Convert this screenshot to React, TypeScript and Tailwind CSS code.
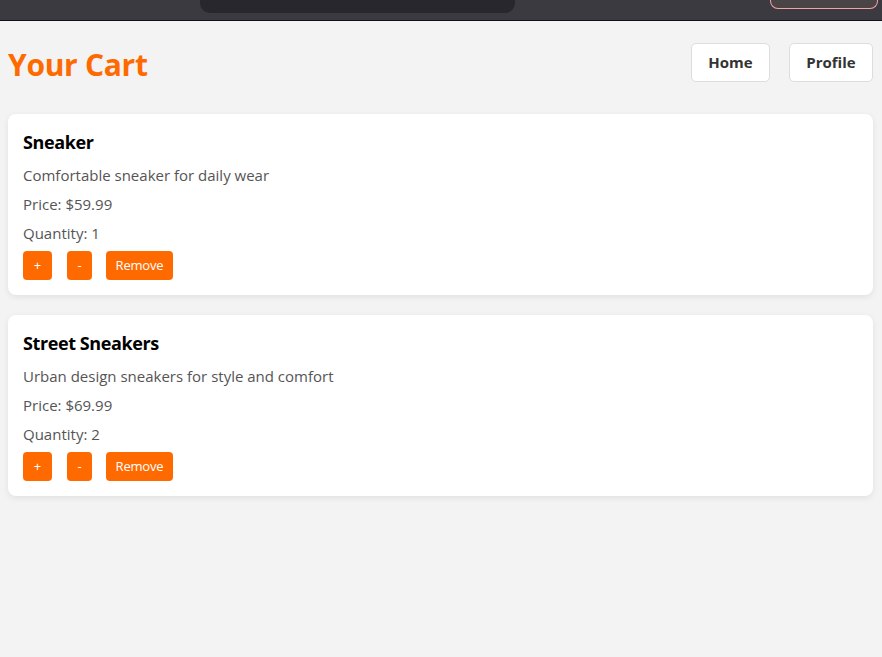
import React from "react";

const items = [
  { name: "Sneaker", desc: "Comfortable sneaker for daily wear", price: "59.99", qty: 1 },
  { name: "Street Sneakers", desc: "Urban design sneakers for style and comfort", price: "69.99", qty: 2 },
];

export default function App() {
  return (
    <div className="min-h-[657px] bg-[#f3f3f3] text-black" style={{ fontFamily: '"Open Sans", "Noto Sans", sans-serif' }}>
      <div className="relative h-[21px] bg-[#3b3a40] border-b border-[#111]">
        <div className="absolute left-[200px] top-0 h-[13px] w-[315px] rounded-b-[10px] bg-[#28272d]" />
        <div className="absolute left-[770px] top-0 h-[9px] w-[108px] rounded-b-[8px] border border-t-0 border-[#f0a5a5] bg-[#4b4446]" />
      </div>
      <div className="pl-2 pr-[9px] pt-[22px]">
        <div className="flex items-center justify-between h-[39px]">
          <h1 className="text-[30px] font-bold text-[#ff6a00] leading-[40px] mt-[4px] tracking-[-0.3px]">Your Cart</h1>
          <div className="flex gap-[19px]">
            <button className="h-[39px] w-[79px] rounded-[5px] border border-[#dddddd] bg-white text-[15px] font-bold text-[#333]">Home</button>
            <button className="h-[39px] w-[84px] rounded-[5px] border border-[#dddddd] bg-white text-[15px] font-bold text-[#333]">Profile</button>
          </div>
        </div>
        <div className="mt-[32px] flex flex-col gap-[20px]">
          {items.map((it) => (
            <div key={it.name} className="rounded-[8px] bg-white p-[15px] shadow-[0_2px_6px_rgba(0,0,0,0.08)]">
              <h3 className="text-[18px] font-bold leading-[26px] tracking-[-0.4px]">{it.name}</h3>
              <p className="mt-[10px] text-[15px] leading-[21px] text-[#555]">{it.desc}</p>
              <p className="mt-[8px] text-[15px] leading-[21px] text-[#555]">Price: ${it.price}</p>
              <p className="mt-[8px] text-[15px] leading-[21px] text-[#555]">Quantity: {it.qty}</p>
              <div className="mt-[7px] flex gap-[15px]">
                <button className="h-[29px] w-[29px] rounded-[4px] bg-[#ff6a00] text-[13px] text-white">+</button>
                <button className="h-[29px] w-[25px] rounded-[4px] bg-[#ff6a00] text-[13px] text-white">-</button>
                <button className="-ml-[1px] h-[29px] w-[67px] rounded-[4px] bg-[#ff6a00] text-[13px] text-white tracking-[-0.2px]">Remove</button>
              </div>
            </div>
          ))}
        </div>
      </div>
    </div>
  );
}
